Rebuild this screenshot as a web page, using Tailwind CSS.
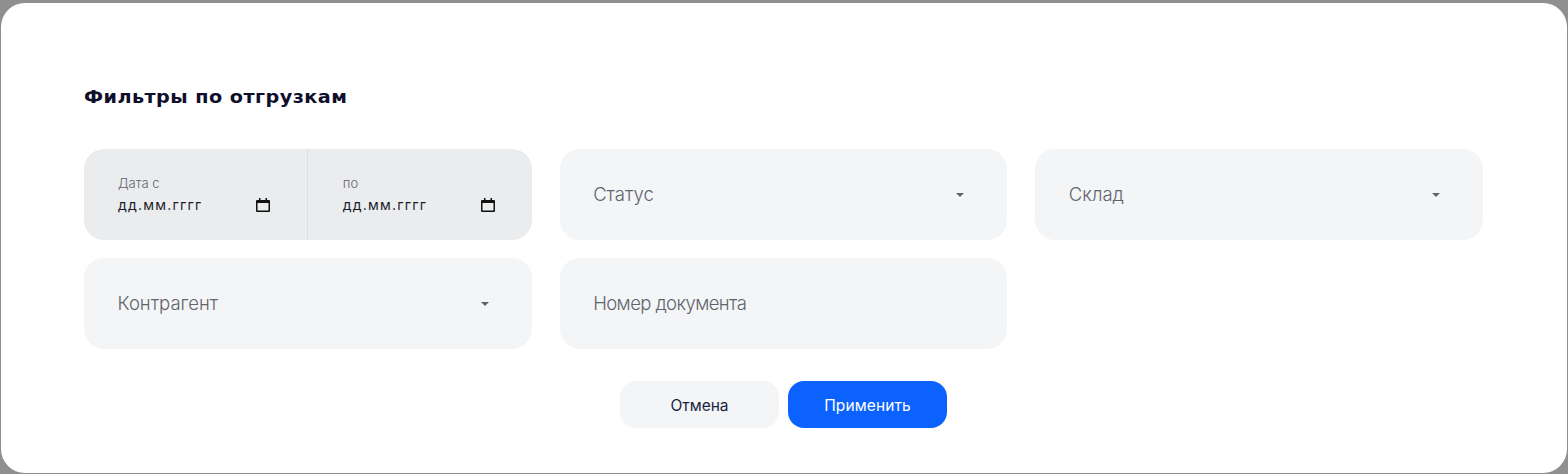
<!DOCTYPE html>
<html lang="ru">
<head>
  <meta charset="UTF-8">
  <title>Фильтры по отгрузкам</title>
  <script src="https://cdn.jsdelivr.net/npm/@tailwindcss/browser@4"></script>
</head>
<body class="bg-[#8f8f8f] h-[474px] overflow-hidden font-['Inter',sans-serif]">

<div class="h-[474px] pt-[3px] pl-px pr-px">
  <div class="bg-white h-[470px] rounded-[24px] pt-[81px] px-[83px]">
    <h2 class="w-fit font-['DejaVu_Sans',sans-serif] font-bold text-[17px] tracking-[0.4px] leading-6 mt-px -mb-px origin-left scale-x-[1.13] text-[#0f0f2d]">Фильтры по отгрузкам</h2>

    <div class="grid grid-cols-3 gap-x-[28px] gap-y-[18px] mt-[41px] w-[1399px]">
      <div class="flex h-[91px] rounded-[20px] bg-[#ebecee]">
        <div class="flex-1 border-r border-[#dcdde0] pl-[34px] pr-[37px] pt-[26px]">
          <div class="text-[13px] font-light leading-4 text-[#5f646c]">Дата с</div>
          <div class="flex justify-between items-center mt-[3px] text-[14px] leading-5 tracking-[1.2px] text-[#1c1c28]">
            <span class="mt-px">дд.мм.гггг</span>
            <svg class="w-[14px] h-[14px]" viewBox="0 0 14 14" fill="#111"><path d="M3 0h1.500v2h5V0H11v2h2a1 1 0 0 1 1 1v10a1 1 0 0 1-1 1H1a1 1 0 0 1-1-1V3a1 1 0 0 1 1-1h2zM1.500 5v7.500h11V5z"/></svg>
          </div>
        </div>
        <div class="flex-1 pl-[35px] pr-[37px] pt-[26px]">
          <div class="text-[13px] font-light leading-4 text-[#5f646c]">по</div>
          <div class="flex justify-between items-center mt-[3px] text-[14px] leading-5 tracking-[1.2px] text-[#1c1c28]">
            <span class="mt-px">дд.мм.гггг</span>
            <svg class="w-[14px] h-[14px]" viewBox="0 0 14 14" fill="#111"><path d="M3 0h1.500v2h5V0H11v2h2a1 1 0 0 1 1 1v10a1 1 0 0 1-1 1H1a1 1 0 0 1-1-1V3a1 1 0 0 1 1-1h2zM1.500 5v7.500h11V5z"/></svg>
          </div>
        </div>
      </div>

      <div class="flex items-center justify-between h-[91px] rounded-[20px] bg-[#f4f5f7] pl-[33.5px] pr-[43px] text-[18.500px] font-light text-[#5f646c]">
        Статус
        <svg class="w-[8px] h-[4px]" viewBox="0 0 8 4" fill="#5f646c"><path d="M0 0h8L4 4z"/></svg>
      </div>

      <div class="flex items-center justify-between h-[91px] rounded-[20px] bg-[#f4f5f7] pl-[33.5px] pr-[43px] text-[18.500px] font-light text-[#5f646c]">
        Склад
        <svg class="w-[8px] h-[4px]" viewBox="0 0 8 4" fill="#5f646c"><path d="M0 0h8L4 4z"/></svg>
      </div>

      <div class="flex items-center justify-between h-[91px] rounded-[20px] bg-[#f4f5f7] pl-[33.5px] pr-[43px] text-[18.500px] font-light text-[#5f646c]">
        Контрагент
        <svg class="w-[8px] h-[4px]" viewBox="0 0 8 4" fill="#5f646c"><path d="M0 0h8L4 4z"/></svg>
      </div>

      <div class="flex items-center h-[91px] rounded-[20px] bg-[#f4f5f7] pl-[33.5px] text-[18.500px] font-light tracking-[-0.6px] text-[#5f646c]">
        Номер документа
      </div>
    </div>

    <div class="flex justify-center gap-[9px] mt-[32px] w-[1399px]">
      <button class="w-[159px] h-[47px] pt-[2px] rounded-[16px] bg-[#f4f5f7] text-[15.500px] text-[#1b2440]">Отмена</button>
      <button class="w-[159px] h-[47px] pt-[2px] rounded-[16px] bg-[#0b62ff] text-[15.500px] tracking-[0.1px] text-white">Применить</button>
    </div>
  </div>
</div>

</body>
</html>
